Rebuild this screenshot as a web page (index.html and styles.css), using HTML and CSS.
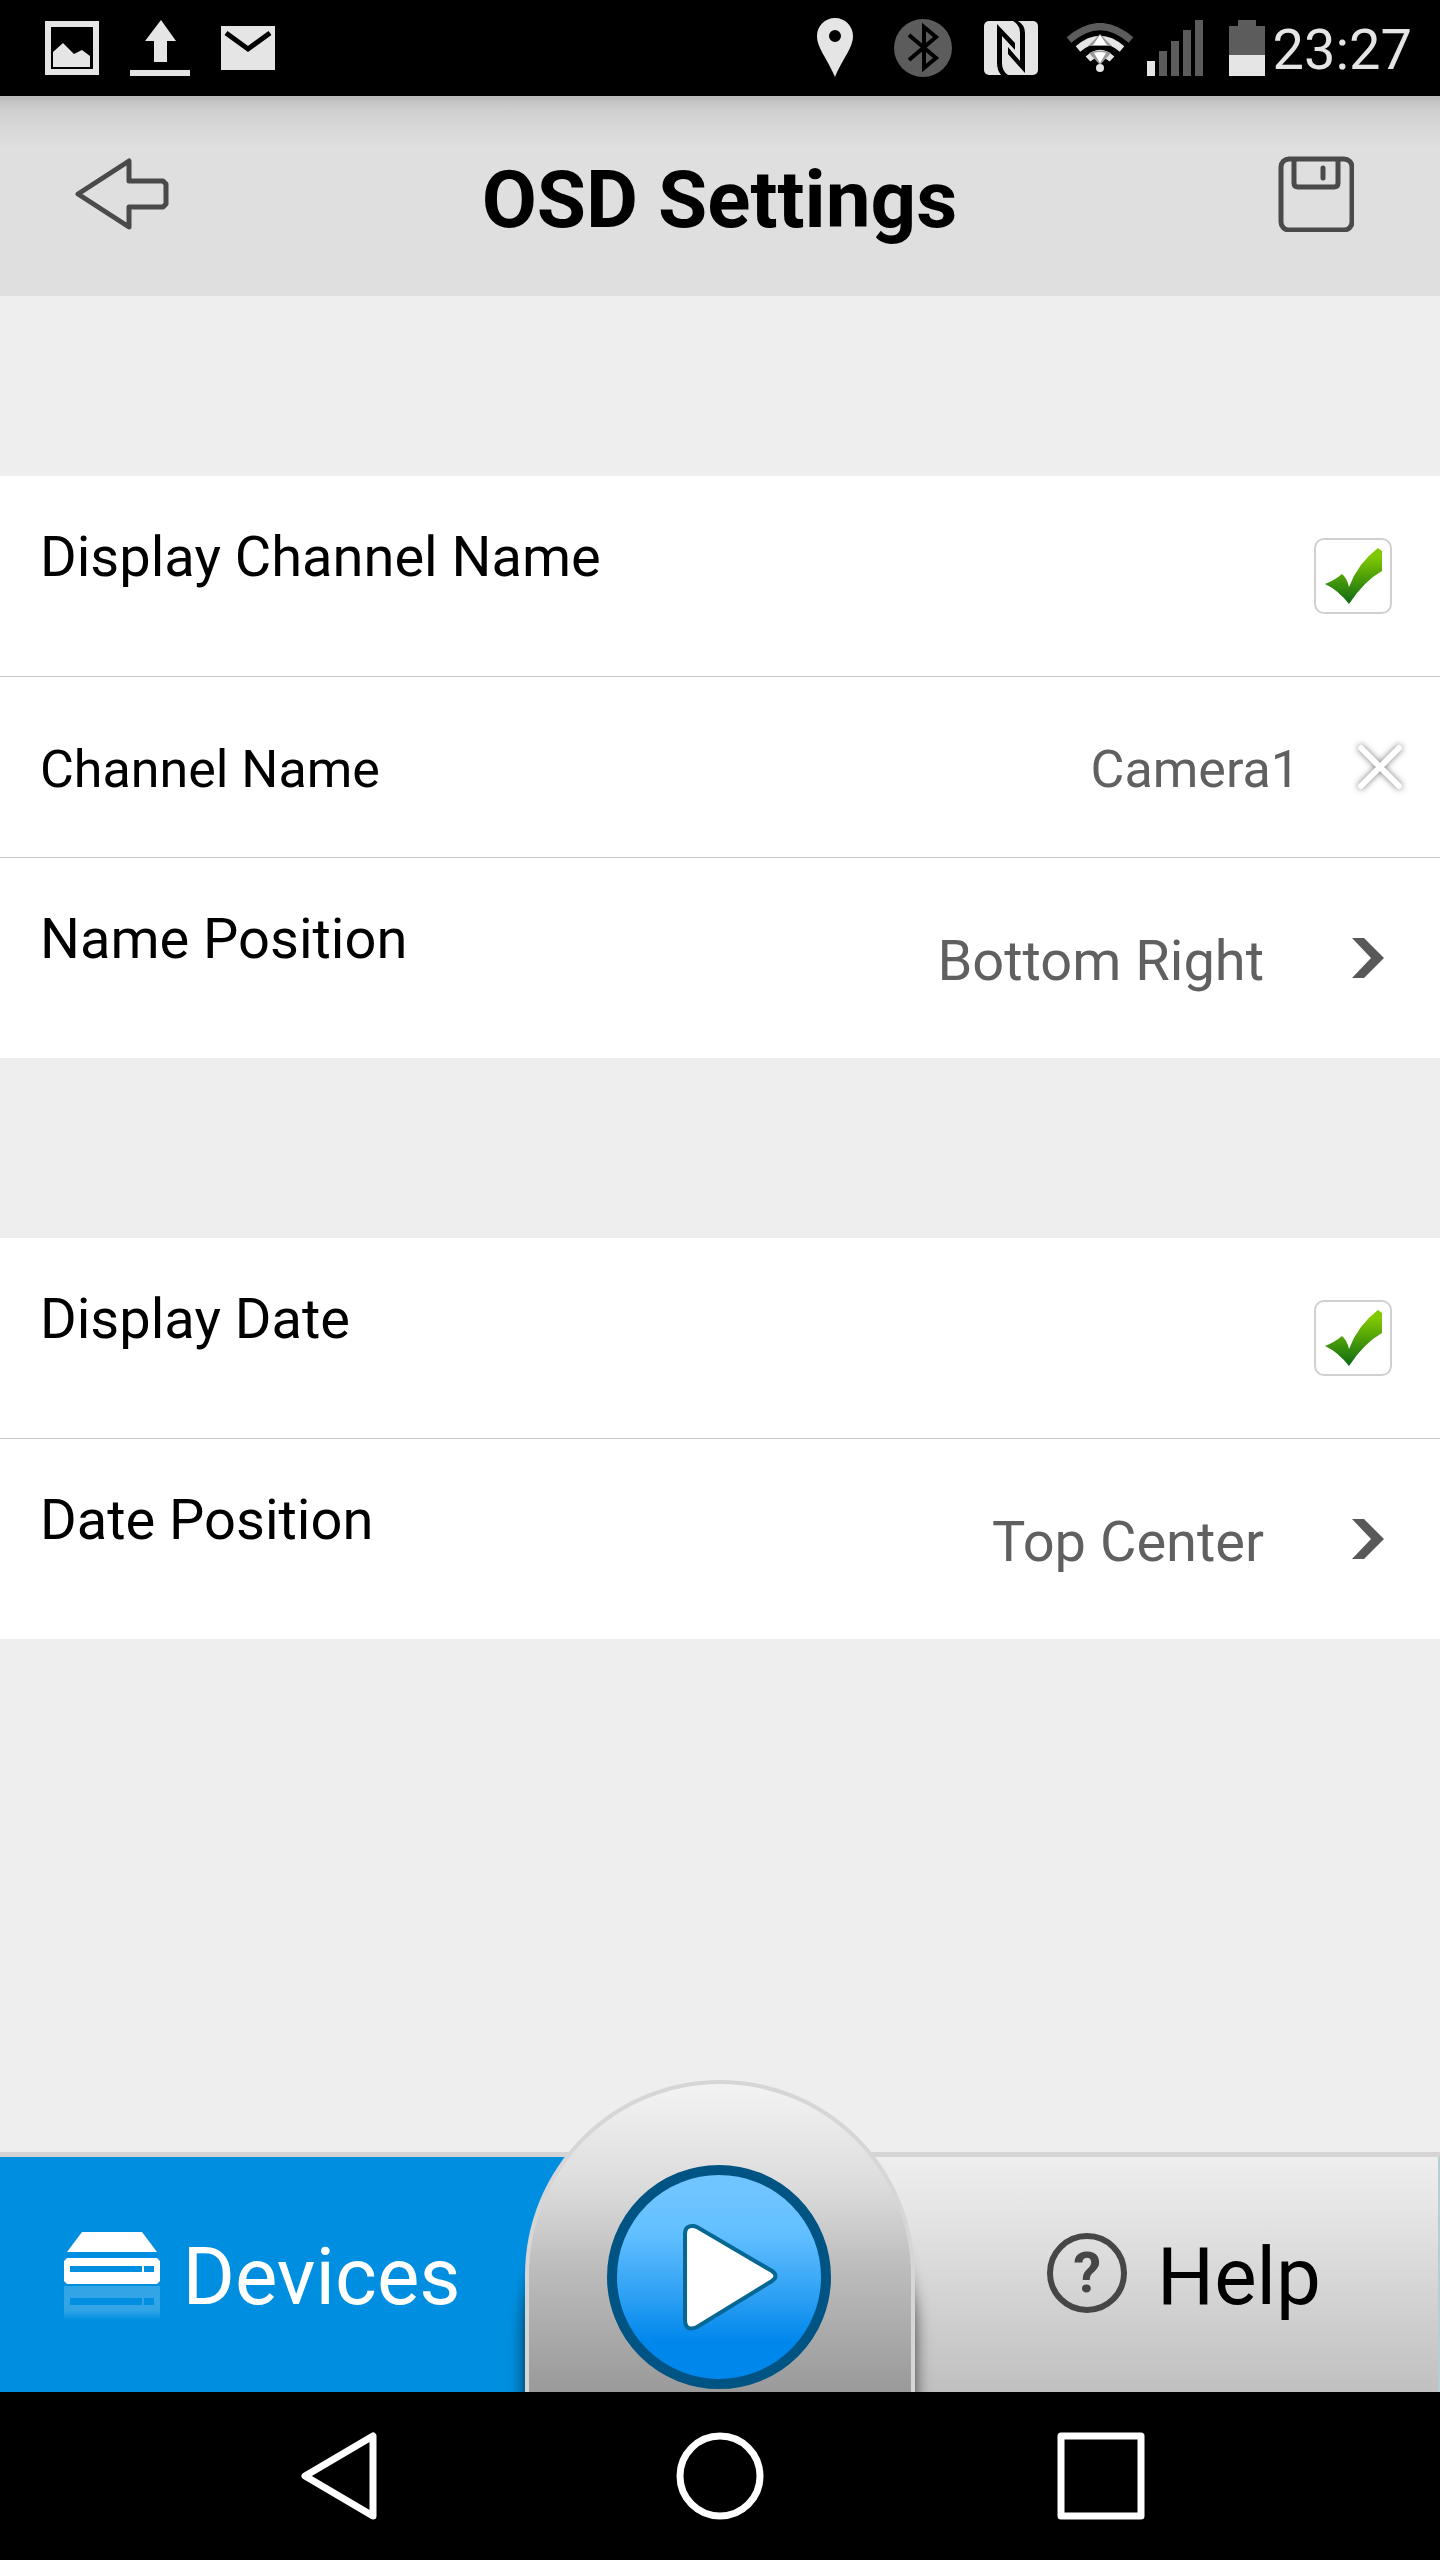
FILE: index.html
```html
<!DOCTYPE html>
<html lang="en">
<head>
<meta charset="utf-8">
<meta name="viewport" content="width=device-width, initial-scale=1">
<title>OSD Settings</title>
<link rel="stylesheet" href="styles.css">
</head>
<body>
<div class="status">
  <div class="status-left">
    <svg width="54" height="54" viewBox="0 0 54 54" fill="#e5e5e5" aria-hidden="true"><path fill-rule="evenodd" d="M0 0h54v54H0zM6 6v42h42V6z"/><path d="M8 31l10-9 11 11 8-4 8 6v11H8z"/></svg>
    <svg width="60" height="56" viewBox="0 0 60 56" fill="#e5e5e5" aria-hidden="true"><path d="M31 0l15 21h-9v21H24V21h-9zM0 50h60v6H0z"/></svg>
    <svg width="54" height="44" viewBox="0 0 54 44" aria-hidden="true"><path fill="#e5e5e5" d="M0 0h54v44H0z"/><path d="M5 7l22 16L49 7" fill="none" stroke="#000" stroke-width="5"/></svg>
  </div>
  <div class="status-right">
    <svg width="36" height="60" viewBox="0 0 36 60" aria-hidden="true"><path fill="#e5e5e5" fill-rule="evenodd" d="M18 0C8 0 0 8 0 18c0 12 10 22 18 41 8-19 18-29 18-41C36 8 28 0 18 0zm0 12a6 6 0 110 12 6 6 0 010-12z"/></svg>
    <svg width="58" height="58" viewBox="0 0 58 58" aria-hidden="true"><circle cx="29" cy="29" r="29" fill="#5c5c5c"/><path d="M15 16l27 23-12 10V8l12 10-27 23" fill="none" stroke="#000" stroke-width="4"/></svg>
    <svg width="54" height="54" viewBox="0 0 54 54" aria-hidden="true"><rect width="54" height="54" rx="5" fill="#e5e5e5"/><path d="M13 3l18 19v7L18 15v27q0 8 6 12h-7q-4-5-4-12zM41 52L24 33v-7l12 14V12Q36 4 29 0h5q7 4 7 12z"/></svg>
    <svg width="68" height="50" viewBox="0 0 68 50" fill="none" aria-hidden="true"><path d="M3 17Q34-10 65 17" stroke="#5c5c5c" stroke-width="7"/><path d="M12 26Q34 7 56 26" stroke="#e5e5e5" stroke-width="7"/><path d="M22 36q12-11 24 0" stroke="#e5e5e5" stroke-width="7"/><path d="M34 11l12 12H22zM34 42L23 30q11-5 22 0z" fill="#999"/><path d="M34 12l7 10H27zM34 40l-6-10q6-2 12 0z" fill="#fff"/><circle cx="34" cy="45" r="4" fill="#e5e5e5"/></svg>
    <svg width="56" height="56" viewBox="0 0 56 56" fill="#5c5c5c" aria-hidden="true"><path fill="#e5e5e5" d="M0 41h8v15H0z"/><path d="M12 31h8v25h-8zM24 21h8v35h-8zM36 10h8v46h-8zM48 0h8v56h-8z"/></svg>
    <svg class="battery" width="36" height="56" viewBox="0 0 36 56" aria-hidden="true"><path fill="#5c5c5c" d="M9 0h18v6h9v30H0V6h9z"/><path fill="#e5e5e5" d="M0 35h36v21H0z"/></svg>
    <time class="clock">23:27</time>
  </div>
</div>

<header class="header">
  <button class="icon-button" type="button" aria-label="Back">
    <svg width="94" height="72" viewBox="0 0 94 72" fill="none" stroke="#4a4a4a" stroke-width="5" stroke-linejoin="round"><path d="M3 36L54 3v20h34l3 3v20l-3 3H54v20z"/></svg>
  </button>
  <h1 class="title">OSD Settings</h1>
  <button class="icon-button icon-button-end" type="button" aria-label="Save">
    <svg width="76" height="76" viewBox="0 0 76 76" fill="none" stroke="#4a4a4a" stroke-width="5"><rect x="3" y="3" width="71" height="71" rx="8"/><path d="M16 3v24q0 4 4 4h36q4 0 4-4V3"/><path d="M45 12v10" stroke-linecap="round"/></svg>
  </button>
</header>

<main class="content">
  <section class="group">
    <div class="row">
      <label class="label" for="show-name">Display Channel Name</label>
      <span class="check"><input id="show-name" type="checkbox" checked>
        <svg width="78" height="76" viewBox="0 0 78 76" aria-hidden="true"><defs><linearGradient id="tick" x1="0" y1="0" x2="0" y2="1"><stop offset=".15" stop-color="#80c800"/><stop offset="1" stop-color="#0c6a14"/></linearGradient></defs><path fill="url(#tick)" d="M11 46q10-4 17-10 5 4 7 13Q44 25 64 10l4 3v20Q50 43 35 66 24 52 11 46z"/></svg>
      </span>
    </div>
    <div class="row row-compact">
      <label class="label" for="name">Channel Name</label>
      <input class="value value-input" id="name" type="text" value="Camera1">
      <button class="clear" type="button" aria-label="Clear">
        <svg width="60" height="60" viewBox="0 0 60 60" fill="none" stroke-linecap="round"><path class="clear-cross" d="M11 11l38 38M49 11L11 49" stroke="#fff" stroke-width="6"/></svg>
      </button>
    </div>
    <div class="row">
      <label class="label" for="name-position">Name Position</label>
      <select class="value" id="name-position"><option>Bottom Right</option></select>
      <svg class="chevron" width="32" height="40" viewBox="0 0 32 40" aria-hidden="true"><path fill="#595959" d="M0 0h12l20 20-20 20H0l19-20z"/></svg>
    </div>
  </section>
  <section class="group">
    <div class="row">
      <label class="label" for="show-date">Display Date</label>
      <span class="check"><input id="show-date" type="checkbox" checked>
        <svg width="78" height="76" viewBox="0 0 78 76" aria-hidden="true"><path fill="url(#tick)" d="M11 46q10-4 17-10 5 4 7 13Q44 25 64 10l4 3v20Q50 43 35 66 24 52 11 46z"/></svg>
      </span>
    </div>
    <div class="row">
      <label class="label" for="date-position">Date Position</label>
      <select class="value" id="date-position"><option>Top Center</option></select>
      <svg class="chevron" width="32" height="40" viewBox="0 0 32 40" aria-hidden="true"><path fill="#595959" d="M0 0h12l20 20-20 20H0l19-20z"/></svg>
    </div>
  </section>
</main>

<nav class="tabs">
  <a class="tab tab-devices" href="#devices">
    <svg width="96" height="90" viewBox="0 0 96 90" aria-hidden="true"><defs><linearGradient id="fade" x1="0" y1="0" x2="0" y2="1"><stop offset="0" stop-color="#fff" stop-opacity=".2"/><stop offset=".7" stop-color="#fff" stop-opacity=".2"/><stop offset="1" stop-color="#fff" stop-opacity="0"/></linearGradient></defs><path fill="#fff" d="M18 0h60l15 20H3z"/><path fill="#fff" fill-rule="evenodd" d="M3 26h90l3 3v20l-3 3H3l-3-3V29zM6 34v6h72v-6zM80 34v6h10v-6z"/><path fill="url(#fade)" fill-rule="evenodd" d="M0 54h96v34H0zM6 66v7h72v-7zM80 66v7h10v-7z"/></svg>
    <span>Devices</span>
  </a>
  <a class="tab tab-help" href="#help">
    <span class="help-icon" aria-hidden="true">?</span>
    <span>Help</span>
  </a>
  <button class="dome" type="button" aria-label="Play">
    <svg width="226" height="226" viewBox="0 0 226 226"><defs><linearGradient id="disc" x1="0" y1="0" x2="0" y2="1"><stop offset=".1" stop-color="#6fc5ff"/><stop offset=".3" stop-color="#62bfff"/><stop offset=".6" stop-color="#2b9ff3"/><stop offset=".8" stop-color="#0087ec"/><stop offset="1" stop-color="#0087ec"/></linearGradient></defs><circle cx="112" cy="113" r="107" fill="url(#disc)" stroke="#005483" stroke-width="10"/><path d="M78 70q0-9 9-8l3 1 75 44q7 5 0 10l-75 46q-11 5-12-6z" fill="#fff" stroke="#066794" stroke-width="4"/></svg>
  </button>
</nav>

<div class="navbar">
  <button type="button" aria-label="Back"><svg width="88" height="88" viewBox="0 0 88 88" fill="none" stroke="#fff" stroke-width="7" stroke-linejoin="round"><path d="M10 44L78 4v80z"/></svg></button>
  <button type="button" aria-label="Home"><svg width="88" height="88" viewBox="0 0 88 88" fill="none" stroke="#fff" stroke-width="7"><circle cx="44" cy="44" r="40"/></svg></button>
  <button type="button" aria-label="Recent apps"><svg width="88" height="88" viewBox="0 0 88 88" fill="none" stroke="#fff" stroke-width="7" stroke-linejoin="round"><path d="M4 4h80v80H4z"/></svg></button>
</div>
</body>
</html>
```
FILE: styles.css
```css
* { box-sizing: border-box; }

body {
  margin: 0;
  min-height: 100vh;
  display: flex;
  flex-direction: column;
  background: #eeeeee;
  color: #000;
  font-family: Roboto, "Liberation Sans", sans-serif;
  font-size: 56px;
}

svg { display: block; flex: none; }

button {
  margin: 0;
  padding: 0;
  border: 0;
  background: none;
  font: inherit;
}

/* Status bar */
.status {
  height: 96px;
  padding: 0 28px 0 45px;
  display: flex;
  align-items: center;
  justify-content: space-between;
  background: #000;
}
.status-left { display: flex; align-items: center; gap: 31px; }
.status-right { display: flex; align-items: center; }
.status-right svg { margin-right: 28px; }
.status-right svg:first-child { margin-right: 41px; }
.status-right svg:nth-child(2) { margin-right: 32px; }
.status-right svg:nth-child(4) { margin-right: 13px; }
.status-right svg:nth-child(5) { margin-right: 26px; }
.status-right .battery { margin-right: 8px; }
.clock { color: #e5e5e5; line-height: 66px; padding-top: 4px; }

/* Title bar */
.header {
  height: 200px;
  padding: 0 86px 0 75px;
  display: grid;
  grid-template-columns: 1fr auto 1fr;
  align-items: center;
  background: linear-gradient(#bbb 0, #bbb 4px, #c4c4c4 5px, #d0d0d0 15px, #d8d8d8 32px, #dfdfdf 52px);
}
.icon-button { justify-self: start; padding-bottom: 4px; }
.icon-button-end { justify-self: end; }
.title {
  margin: 0;
  padding: 8px 0 0 10px;
  font-size: 80px;
  line-height: 94px;
  font-weight: 700;
}

/* Settings */
.content { flex: 1; }
.group { margin-top: 180px; background: #fff; }
.row {
  min-height: 200px;
  padding: 0 48px 0 40px;
  display: flex;
  align-items: center;
}
.row + .row { border-top: 1px solid #c8c8c8; min-height: 201px; }
.row + .row-compact { min-height: 181px; padding-right: 30px; font-size: 52px; }
.label {
  align-self: flex-start;
  margin-right: auto;
  padding-top: 48px;
  line-height: 66px;
}
.row-compact .label { align-self: center; padding-top: 6px; }
.value {
  appearance: none;
  margin: 0;
  padding: 6px 0 0;
  border: 0;
  background: none;
  color: #606060;
  font: inherit;
  line-height: 66px;
  text-align: right;
  text-align-last: right;
}
.value-input { flex: 1; min-width: 0; }
.chevron { margin: 0 8px 0 88px; }
.clear { margin-left: 50px; }
.clear-cross { filter: drop-shadow(0 0 3px #777); }

.check { display: grid; }
.check > * { grid-area: 1 / 1; }
.check input {
  appearance: none;
  width: 78px;
  height: 76px;
  margin: 0;
  border: 2px solid #d0d0d0;
  border-radius: 10px;
  background: #fff;
}
.check svg { pointer-events: none; visibility: hidden; }
.check input:checked + svg { visibility: visible; }

/* Tab bar */
.tabs {
  position: relative;
  height: 240px;
  display: grid;
  grid-template-columns: 1fr 1fr;
  border-top: 5px solid #d4d4d4;
  font-size: 80px;
}
.tab {
  display: flex;
  align-items: center;
  justify-content: center;
  padding-top: 4px;
  color: #000;
  text-decoration: none;
  line-height: 94px;
}
.tab-devices { padding-right: 195px; gap: 22px; background: #008fe0; color: #fff; }
.tab-help {
  padding-left: 210px;
  gap: 30px;
  border-right: 2px solid #b9cdd6;
  background: linear-gradient(#eeeeee, #e4e4e4 25%, #c0c0c0);
}
.help-icon {
  width: 80px;
  height: 80px;
  display: flex;
  align-items: center;
  justify-content: center;
  border: 6px solid #464646;
  border-radius: 50%;
  color: #464646;
  font-size: 56px;
  font-weight: 700;
  margin-bottom: 8px;
}
.dome {
  position: absolute;
  left: calc(50% - 195px);
  bottom: 0;
  width: 390px;
  height: 312px;
  padding-top: 80px;
  display: flex;
  justify-content: center;
  align-items: flex-start;
  border: 4px solid #d6d6d6;
  border-bottom: 0;
  border-radius: 195px 195px 0 0;
  background: linear-gradient(#f3f3f3, #dcdcdc 33%, #bcbcbc 60%, #9a9a9a);
  box-shadow: 0 60px 16px 0 rgba(0, 0, 0, .7);
}

/* System navigation */
.navbar {
  position: relative;
  height: 168px;
  padding: 0 148px;
  display: grid;
  grid-template-columns: repeat(3, 1fr);
  place-items: center;
  background: #000;
}
```
